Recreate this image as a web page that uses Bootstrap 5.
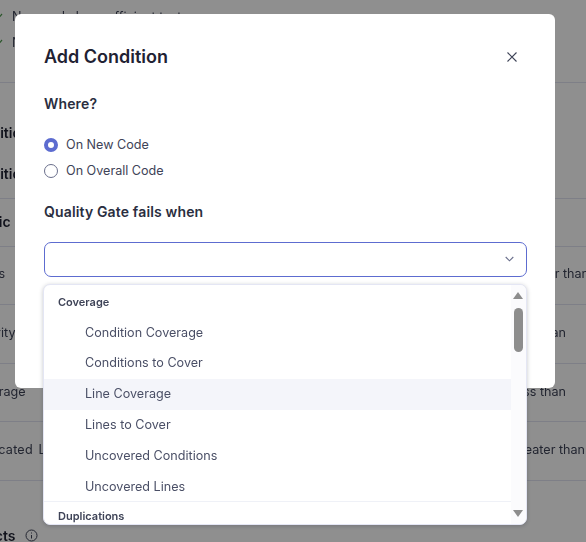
<!doctype html>
<html lang="en"><head><meta charset="utf-8"><title>Add Condition</title>
<link href="https://cdn.jsdelivr.net/npm/bootstrap@5.3.0/dist/css/bootstrap.min.css" rel="stylesheet">
<style>
html,body{height:100%;overflow:hidden}
body{font-family:Inter,"Liberation Sans",sans-serif;font-size:12.6px;color:#3e4357;background:#fff}
.page-under{height:542px;overflow:hidden;position:relative;color:#3e4357;will-change:transform}
.under-check{height:26px;display:flex;align-items:center;gap:8px;white-space:nowrap}
.under-check svg{margin-left:-6px}
.under-top{padding-top:4px;height:83px;border-bottom:1px solid #e1e3f0}
.under-row{display:flex;justify-content:space-between;align-items:center;white-space:nowrap;border-bottom:1px solid #e1e3f0;overflow:hidden;color:#3e4357}
.under-b{font-weight:600;color:#1f2233;font-size:14px}
.under-sec{height:116px;padding-top:29px;border-bottom:1px solid #e1e3f0}
.under-sec div{height:41px;display:flex;align-items:center;white-space:nowrap}
.under-foot{padding-top:44px;font-weight:600;font-size:14px;color:#1f2233;display:flex;align-items:center;gap:10px}
.rh48{height:48px;padding-bottom:3px}.rh58{height:58px;padding-bottom:2px}.rh59{height:59px;padding-bottom:2px}.rh58b{height:58px}
.cut36{margin-left:-36px}.cut33{margin-left:-33px}.cut34{margin-left:-34px}.cut32{margin-left:-32px}.cut40{margin-left:-40px}
.dup-name{margin-left:-33px;letter-spacing:.2px;word-spacing:2px}
.rm-3{margin-right:-3px}.rm20{margin-right:20px}.rm1{margin-right:1px}
.veil{position:fixed;inset:0;background:rgba(0,0,0,.44)}
.dlg{position:fixed;left:15px;top:13.5px;width:540px;height:374px;background:#fff;border-radius:6px;padding:0 29px}
.dlg-title{font-size:18px;font-weight:600;color:#1f2233;line-height:24px;margin:0;padding-top:31.5px}
.dlg-x{position:absolute;right:36px;top:36.5px;width:14px;height:14px;display:block}
.dlg-h{font-size:14px;font-weight:600;color:#2a2e40;line-height:20px;margin:0;letter-spacing:.15px}
.gap-where{margin-top:25px}.gap-radio{margin-top:18px}.gap-gate{margin-top:18px}
.radio-line{display:flex;align-items:center;gap:8px;height:26px;color:#3e4357}
.rdot{width:14px;height:14px;border-radius:50%;border:1px solid #6a6f8c;background:#fff;flex:none;box-sizing:border-box}
.rdot-on{border:4.5px solid #5d6cd0}
.sel-box{height:34.5px;margin:20px -.5px 0;border:1px solid #5d6cd0;border-radius:7px;display:flex;align-items:center;justify-content:flex-end;padding-right:12px}
.drop{position:fixed;left:43px;top:284px;width:484px;height:240.5px;background:#fff;border:1px solid #e4e6f4;border-radius:7px;box-shadow:0 1px 4px rgba(29,33,47,.25);overflow:hidden;display:flex}
.drop-list{flex:1;min-width:0;overflow:hidden}
.drop-rail{width:15px;background:#fbfbfd;position:relative;flex:none}
.grp{font-size:11px;font-weight:600;color:#3e4357;padding-left:14px;line-height:16px}
.grp-first{padding-top:9px}.grp-next{padding-top:6px}
.opt{height:31px;padding-left:41px;display:flex;align-items:center;color:#4a4f66}
.opt-first{margin-top:8px;height:30px}.opt-second{padding-bottom:1px}
.opt-lift{padding-bottom:.5px}
.opt-last{height:29px;padding-top:1.5px}
.opt-hot{background:#f4f5fa}
.grp-rule{border-top:1.5px solid #eff1f7}
.thumb{position:absolute;left:3px;top:23px;width:9px;height:44px;border-radius:5px;background:#8d8d8d}
.tri{position:absolute;left:2px;width:0;height:0;border-left:5.5px solid transparent;border-right:5.5px solid transparent}
.tri-up{top:7px;border-bottom:7px solid #8d8d8d}
.tri-dn{bottom:7px;border-top:7px solid #8d8d8d}
</style></head>
<body>
<div class="page-under">
  <div class="under-top">
    <div class="under-check"><svg width="10" height="10" viewBox="0 0 10 10" fill="none" stroke="#4c9a4c" stroke-width="1.2"><path d="M0 5l3 3 5-6"/></svg><span>New code has sufficient test coverage</span></div>
    <div class="under-check"><svg width="10" height="10" viewBox="0 0 10 10" fill="none" stroke="#4c9a4c" stroke-width="1.2"><path d="M0 5l3 3 5-6"/></svg><span>New code has limited duplications</span></div>
  </div>
  <div class="under-sec under-b"><div><span class="cut36">Condition</span></div><div><span class="cut36">Condition</span></div></div>
  <div class="under-row under-b rh48"><span class="cut33">Metric</span></div>
  <div class="under-row rh58"><span class="cut33">Issues</span><span class="rm-3">is greater than</span></div>
  <div class="under-row rh59"><span class="cut34">Security</span><span class="rm20">is less than</span></div>
  <div class="under-row rh58b"><span class="cut32">Coverage</span><span class="rm20">is less than</span></div>
  <div class="under-row rh59"><span class="dup-name">Duplicated Lines</span><span class="rm1">is greater than</span></div>
  <div class="under-foot"><span class="cut40">Projects</span><svg width="13" height="13" viewBox="0 0 13 13" fill="none" stroke="#3e4357"><circle cx="6.5" cy="6.5" r="5.5"/><path d="M6.5 6v3.5M6.5 3.5v1"/></svg></div>
</div>
<div class="veil"></div>
<div class="dlg">
  <h2 class="dlg-title">Add Condition</h2>
  <svg class="dlg-x" viewBox="0 0 14 14" fill="none" stroke="#3e4357" stroke-width="1.1"><path d="M2.5 2.5l9 9M11.5 2.5l-9 9"/></svg>
  <p class="dlg-h gap-where">Where?</p>
  <div class="gap-radio">
    <div class="radio-line"><span class="rdot rdot-on"></span><span>On New Code</span></div>
    <div class="radio-line"><span class="rdot"></span><span>On Overall Code</span></div>
  </div>
  <p class="dlg-h gap-gate">Quality Gate fails when</p>
  <div class="sel-box"><svg width="9" height="6" viewBox="0 0 9 6" fill="none" stroke="#6a6f8c" stroke-width="1.1"><path d="M.7 1l3.8 3.8L8.3 1"/></svg></div>
</div>
<div class="drop">
  <div class="drop-list">
    <div class="grp grp-first">Coverage</div>
    <div class="opt opt-first">Condition Coverage</div>
    <div class="opt opt-second">Conditions to Cover</div>
    <div class="opt opt-hot opt-lift">Line Coverage</div>
    <div class="opt opt-lift">Lines to Cover</div>
    <div class="opt opt-lift">Uncovered Conditions</div>
    <div class="opt opt-last">Uncovered Lines</div>
    <div class="grp-rule"></div>
    <div class="grp grp-next">Duplications</div>
  </div>
  <div class="drop-rail"><span class="tri tri-up"></span><span class="thumb"></span><span class="tri tri-dn"></span></div>
</div>
<script src="https://cdn.jsdelivr.net/npm/bootstrap@5.3.0/dist/js/bootstrap.bundle.min.js"></script>
</body></html>
